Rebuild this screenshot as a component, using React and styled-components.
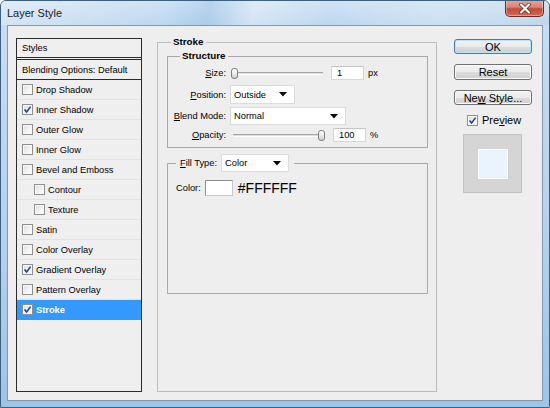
import styled, { createGlobalStyle } from "styled-components"

const Global = createGlobalStyle`
    html, body {
        margin: 0;
        padding: 0;
        background: #ffffff;
    }
    * {
        box-sizing: border-box;
    }
`

const styleItems = [
    { name: "Drop Shadow" },
    { name: "Inner Shadow", checked: true },
    { name: "Outer Glow" },
    { name: "Inner Glow" },
    { name: "Bevel and Emboss" },
    { name: "Contour", sub: true },
    { name: "Texture", sub: true },
    { name: "Satin" },
    { name: "Color Overlay" },
    { name: "Gradient Overlay", checked: true },
    { name: "Pattern Overlay" },
    { name: "Stroke", checked: true, active: true },
]

const Check = ({ checked }) => (
    <CheckBox>
        {checked && (
            <svg width="9" height="9" viewBox="0 0 9 9">
                <path d="M1.5 4.6 L3.6 7 L7.6 1.6" fill="none" stroke="#1d3b8f" strokeWidth="1.5" />
            </svg>
        )}
    </CheckBox>
)

const Caret = () => (
    <svg width="8" height="5" viewBox="0 0 8 5">
        <path d="M0 0 H8 L4 4.5 Z" fill="#000" />
    </svg>
)

const App = () => {
    return (
        <>
            <Global />
            <Window>
                <TitleBar>
                    <Title>Layer Style</Title>
                    <CloseButton>
                        <svg width="14" height="11" viewBox="0 0 14 11">
                            <path d="M3 1.5 L11 9.5 M11 1.5 L3 9.5" stroke="#5a2a24" strokeWidth="3.6" strokeLinecap="round" />
                            <path d="M3 1.5 L11 9.5 M11 1.5 L3 9.5" stroke="#ffffff" strokeWidth="2.2" strokeLinecap="round" />
                        </svg>
                    </CloseButton>
                </TitleBar>

                <Body>
                    <StyleList>
                        <ListHeader>Styles</ListHeader>
                        <BlendRow>Blending Options: Default</BlendRow>
                        {styleItems.map((item) => (
                            <ListRow key={item.name} $sub={item.sub} $active={item.active}>
                                <Check checked={item.checked} />
                                <span>{item.name}</span>
                            </ListRow>
                        ))}
                    </StyleList>

                    <StrokeGroup>
                        <GroupTitle $offset={4}>Stroke</GroupTitle>

                        <StructureGroup>
                            <GroupTitle $offset={12}>Structure</GroupTitle>
                            <FormGrid>
                                <Label $h={16}><span><u>S</u>ize:</span></Label>
                                <Control $h={16}>
                                    <Slider><Thumb $pos={0} /></Slider>
                                    <NumberBox>1</NumberBox>
                                    <Unit>px</Unit>
                                </Control>

                                <Label $h={19}><span><u>P</u>osition:</span></Label>
                                <Control $h={19}>
                                    <Select $w={65} $h={19}>Outside<Caret /></Select>
                                </Control>

                                <Label $h={18}><span><u>B</u>lend Mode:</span></Label>
                                <Control $h={18}>
                                    <Select $w={116} $h={18}>Normal<Caret /></Select>
                                </Control>

                                <Label $h={14}><span><u>O</u>pacity:</span></Label>
                                <Control $h={14}>
                                    <Slider $start={3}><Thumb $pos={100} /></Slider>
                                    <NumberBox>100</NumberBox>
                                    <Unit>%</Unit>
                                </Control>
                            </FormGrid>
                        </StructureGroup>

                        <FillGroup>
                            <FillLegend>
                                <FillLabel><u>F</u>ill Type:</FillLabel>
                                <Select $w={68} $h={18}>Color<Caret /></Select>
                            </FillLegend>
                            <ColorRow>
                                <span>Color:</span>
                                <Swatch />
                                <HexValue>#FFFFFF</HexValue>
                            </ColorRow>
                        </FillGroup>
                    </StrokeGroup>

                    <Actions>
                        <Button $default>OK</Button>
                        <Button>Reset</Button>
                        <Button><span>Ne<u>w</u> Style...</span></Button>
                        <PreviewToggle>
                            <Check checked />
                            <span>Pre<u>v</u>iew</span>
                        </PreviewToggle>
                        <PreviewBox>
                            <PreviewSwatch />
                        </PreviewBox>
                    </Actions>
                </Body>
            </Window>
        </>
    )
}

export default App;

const Window = styled.div`
    width: 550px;
    height: 408px;
    display: flex;
    flex-direction: column;
    border: 1px solid #3d5f82;
    border-radius: 6px 6px 0 0;
    background: linear-gradient(180deg, #c9def2 0%, #b4d1ec 60%, #9ec4e6 100%);
    font-family: "Liberation Sans", Arial, sans-serif;
    font-size: 9.3px;
    color: #000;
    overflow: hidden;
`

const TitleBar = styled.div`
    height: 24px;
    flex: none;
    display: flex;
    align-items: flex-start;
    justify-content: space-between;
    padding-left: 6px;
    background:
        linear-gradient(100deg, rgba(255,255,255,0.35) 0%, rgba(255,255,255,0) 30%, rgba(120,170,215,0.25) 38%, rgba(255,255,255,0.3) 46%, rgba(255,255,255,0) 60%, rgba(255,255,255,0.2) 80%, rgba(255,255,255,0) 100%),
        linear-gradient(180deg, #cfe3f5 0%, #bdd7ef 100%);
`

const Title = styled.div`
    margin-top: 6px;
    font-size: 11px;
    line-height: 13px;
    color: #1b1b1b;
`

const CloseButton = styled.div`
    width: 39px;
    height: 17px;
    margin-right: 5px;
    margin-top: -1px;
    display: flex;
    align-items: center;
    justify-content: center;
    border: 1px solid #6b2a22;
    border-top: none;
    border-radius: 0 0 5px 5px;
    background: linear-gradient(180deg, #eaa898 0%, #d9816f 45%, #c24a3a 55%, #d26a55 100%);
    box-shadow: inset 0 0 0 1px rgba(255,255,255,0.35);
`

const Body = styled.div`
    flex: 1;
    margin: 0 6px 6px 6px;
    display: flex;
    align-items: flex-start;
    padding: 12px 0 0 8px;
    background: #eeeeee;
    border: 1px solid #8397ad;
`

const StyleList = styled.div`
    width: 126px;
    height: 354px;
    flex: none;
    border: 1px solid #2b2b2b;
    background: #efefef;
`

const ListHeader = styled.div`
    height: 19px;
    display: flex;
    align-items: center;
    padding-left: 5px;
    border-bottom: 1px solid #2b2b2b;
`

const BlendRow = styled.div`
    height: 21px;
    margin-top: 1px;
    display: flex;
    align-items: center;
    padding-left: 5px;
    border-top: 1px solid #2b2b2b;
    border-bottom: 1px solid #2b2b2b;
`

const ListRow = styled.div`
    height: 20px;
    display: flex;
    align-items: center;
    gap: 3px;
    padding-left: ${(p) => (p.$sub ? 17 : 5)}px;
    border-bottom: 1px solid ${(p) => (p.$active ? "#3399ff" : "#e2e2e2")};
    background: ${(p) => (p.$active ? "#3399ff" : "transparent")};
    color: ${(p) => (p.$active ? "#ffffff" : "#000000")};
    font-weight: ${(p) => (p.$active ? "bold" : "normal")};
`

const CheckBox = styled.span`
    width: 11px;
    height: 11px;
    flex: none;
    display: inline-flex;
    align-items: center;
    justify-content: center;
    border: 1px solid #8e8f8f;
    background: linear-gradient(135deg, #dcdcdc 0%, #f4f4f4 60%, #ffffff 100%);
    box-shadow: inset 0 0 0 1px #f8f8f8;
`

const StrokeGroup = styled.fieldset`
    width: 280px;
    height: 356px;
    flex: none;
    margin: -2px 0 0 15px;
    padding: 2px 8px 0 9px;
    min-width: 0;
    border: 1px solid #bdbdbd;
    display: flex;
    flex-direction: column;
`

const GroupTitle = styled.legend`
    margin-left: ${(p) => p.$offset}px;
    padding: 0 2px;
    font-weight: bold;
    font-size: 9.8px;
    line-height: 12px;
`

const StructureGroup = styled.fieldset`
    margin: 0;
    padding: 0 0 5px 0;
    min-width: 0;
    border: 1px solid #a9a9a9;
`

const FormGrid = styled.div`
    display: grid;
    grid-template-columns: 58px 1fr;
    column-gap: 4px;
    row-gap: 3px;
    margin-top: 3px;

    & > :nth-child(1), & > :nth-child(2) {
        margin-bottom: 1px;
    }
`

const Label = styled.div`
    height: ${(p) => p.$h}px;
    display: flex;
    align-items: center;
    justify-content: flex-end;
    white-space: nowrap;
`

const Control = styled.div`
    height: ${(p) => p.$h}px;
    display: flex;
    align-items: center;
`

const Slider = styled.div`
    position: relative;
    width: 92px;
    height: 3px;
    margin-left: ${(p) => p.$start || 1}px;
    margin-right: 8px;
    border-top: 1px solid #a6a6a6;
    border-bottom: 1px solid #ffffff;
    background: #dedede;
`

const Thumb = styled.div`
    position: absolute;
    top: -5px;
    left: ${(p) => (p.$pos === 100 ? "calc(100% - 7px)" : "0")};
    width: 7px;
    height: 11px;
    border: 1px solid #7f7f7f;
    border-radius: 3px;
    background: linear-gradient(180deg, #ffffff 0%, #e6e6e6 60%, #cfcfcf 100%);
`

const NumberBox = styled.div`
    width: 33px;
    height: 14px;
    display: flex;
    align-items: center;
    padding-left: 5px;
    background: #ffffff;
    border: 1px solid #d6d6d6;
    border-top-color: #c4c4c4;
`

const Unit = styled.span`
    margin-left: 4px;
`

const Select = styled.div`
    width: ${(p) => p.$w}px;
    height: ${(p) => p.$h}px;
    flex: none;
    display: flex;
    align-items: center;
    justify-content: space-between;
    padding: 0 7px 0 3px;
    background: #ffffff;
    border: 1px solid #dcdcdc;
    font-weight: normal;
`

const FillGroup = styled.fieldset`
    margin: 6px 0 0 0;
    padding: 0 0 0 8px;
    height: 140px;
    min-width: 0;
    border: 1px solid #a9a9a9;
`

const FillLegend = styled.legend`
    margin-left: 0;
    padding: 0 5px 0 4px;
    display: flex;
    align-items: center;
    gap: 4px;
`

const FillLabel = styled.span`
    white-space: nowrap;
`

const ColorRow = styled.div`
    margin-top: 8px;
    display: flex;
    align-items: center;
    gap: 3px;
`

const Swatch = styled.div`
    width: 28px;
    height: 16px;
    margin-left: 1px;
    background: #ffffff;
    border: 1px solid #8f8f8f;
    border-right-color: #c8c8c8;
    border-bottom-color: #c8c8c8;
`

const HexValue = styled.span`
    margin-left: 2px;
    font-size: 14px;
    line-height: 16px;
`

const Actions = styled.div`
    width: 78px;
    flex: none;
    margin: 1px 0 0 17px;
    display: flex;
    flex-direction: column;
    gap: 10px;
`

const Button = styled.div`
    height: 15px;
    display: flex;
    align-items: center;
    justify-content: center;
    font-size: 11px;
    border: 1px solid ${(p) => (p.$default ? "#3c7fb1" : "#707070")};
    border-radius: 3px;
    background: linear-gradient(180deg, #f2f2f2 0%, #ebebeb 50%, #dddddd 51%, #cfcfcf 100%);
    box-shadow: inset 0 0 0 1px ${(p) => (p.$default ? "#b8e4fb" : "#fbfbfb")};

    &:nth-child(2) {
        height: 16px;
    }
`

const PreviewToggle = styled.div`
    display: flex;
    align-items: center;
    gap: 4px;
    margin: -1px 0 0 13px;
    font-size: 11px;
    line-height: 12px;
`

const PreviewBox = styled.div`
    width: 59px;
    height: 59px;
    margin: -2px 0 0 9px;
    display: flex;
    align-items: center;
    justify-content: center;
    background: #d5d5d5;
    border: 1px solid #c2c2c2;
`

const PreviewSwatch = styled.div`
    width: 30px;
    height: 30px;
    background: #e9f4fe;
    border: 1px solid #ffffff;
`
